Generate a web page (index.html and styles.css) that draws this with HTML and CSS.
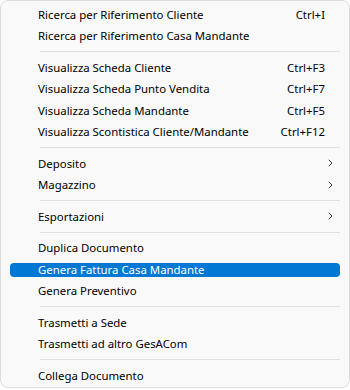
FILE: index.html
```html
<!DOCTYPE html>
<html>
<head>
<meta charset="utf-8">
<link rel="stylesheet" href="styles.css">
</head>
<body>
<div class="menu">
  <div class="item"><span class="label">Ricerca per Riferimento Cliente</span><span class="key">Ctrl+I</span></div>
  <div class="item"><span class="label">Ricerca per Riferimento Casa Mandante</span></div>
  <div class="sep"></div>
  <div class="item"><span class="label">Visualizza Scheda Cliente</span><span class="key">Ctrl+F3</span></div>
  <div class="item"><span class="label">Visualizza Scheda Punto Vendita</span><span class="key">Ctrl+F7</span></div>
  <div class="item"><span class="label">Visualizza Scheda Mandante</span><span class="key">Ctrl+F5</span></div>
  <div class="item"><span class="label">Visualizza Scontistica Cliente/Mandante</span><span class="key">Ctrl+F12</span></div>
  <div class="sep"></div>
  <div class="item"><span class="label">Deposito</span><svg class="chev" width="5" height="8" viewBox="0 0 5 8"><path d="M0.8 0.8 L4 4 L0.8 7.2" fill="none" stroke="#3a3a3a" stroke-width="1"/></svg></div>
  <div class="item"><span class="label">Magazzino</span><svg class="chev" width="5" height="8" viewBox="0 0 5 8"><path d="M0.8 0.8 L4 4 L0.8 7.2" fill="none" stroke="#3a3a3a" stroke-width="1"/></svg></div>
  <div class="sep"></div>
  <div class="item"><span class="label">Esportazioni</span><svg class="chev" width="5" height="8" viewBox="0 0 5 8"><path d="M0.8 0.8 L4 4 L0.8 7.2" fill="none" stroke="#3a3a3a" stroke-width="1"/></svg></div>
  <div class="sep"></div>
  <div class="item"><span class="label">Duplica Documento</span></div>
  <div class="item active"><span class="label">Genera Fattura Casa Mandante</span></div>
  <div class="item"><span class="label">Genera Preventivo</span></div>
  <div class="sep"></div>
  <div class="item"><span class="label">Trasmetti a Sede</span></div>
  <div class="item"><span class="label">Trasmetti ad altro GesACom</span></div>
  <div class="sep"></div>
  <div class="item"><span class="label">Collega Documento</span></div>
</div>
</body>
</html>
```

FILE: styles.css
```css
html, body {
  margin: 0;
  padding: 0;
  background: #ffffff;
}
body {
  width: 350px;
  height: 390px;
  overflow: hidden;
}
.menu {
  box-sizing: border-box;
  width: 350px;
  height: 388px;
  background: #f9f9f9;
  border: 1px solid #dcdcdc;
  border-radius: 8px;
  padding-top: 2.7px;
  font-family: "Noto Sans", "Segoe UI", sans-serif;
  font-size: 11.4px;
  color: #000;
  overflow: hidden;
}
.item {
  position: relative;
  height: 21.5px;
  display: flex;
  align-items: center;
  padding-left: 37px;
  padding-right: 24px;
}
.label {
  flex: 1;
  white-space: nowrap;
}
.key {
  white-space: nowrap;
}
.chev {
  margin-right: -8px;
}
.item.active {
  color: #fff;
}
.item.active::before {
  content: "";
  position: absolute;
  left: 9px;
  right: 9px;
  top: 4px;
  bottom: 3px;
  background: #0078d4;
  border-radius: 4px;
  z-index: 0;
}
.item.active .label {
  position: relative;
  z-index: 1;
}
.sep {
  height: 1px;
  background: #e0e0e0;
  margin: 4.5px 9px 4.5px 39px;
}
```
